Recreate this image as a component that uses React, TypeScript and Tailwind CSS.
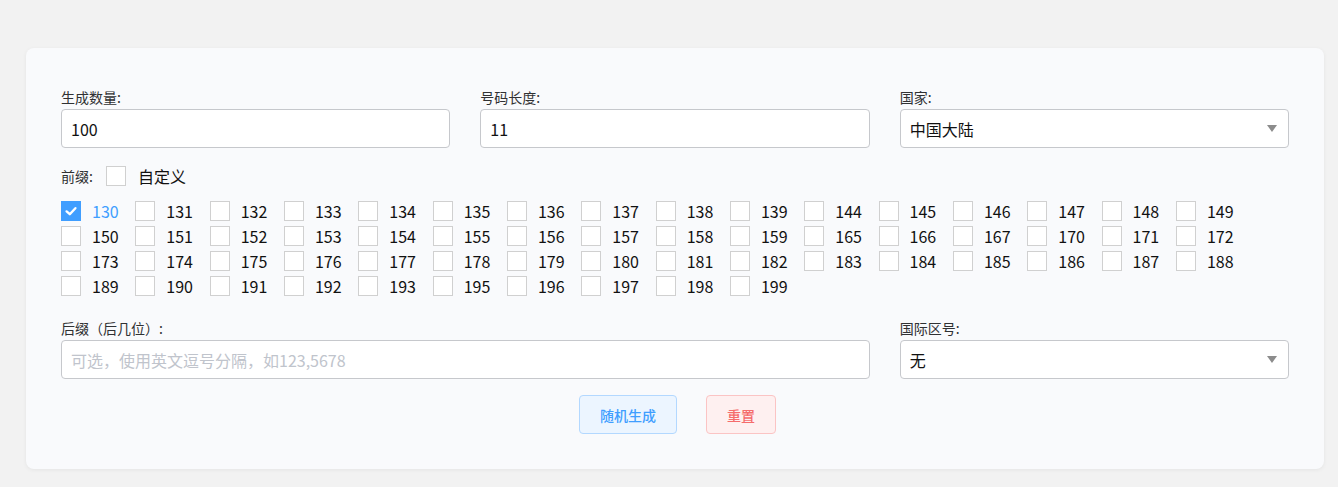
import { useState } from 'react'

const PREFIXES = [
    '130', '131', '132', '133', '134', '135', '136', '137', '138', '139', '144', '145', '146', '147', '148', '149',
    '150', '151', '152', '153', '154', '155', '156', '157', '158', '159', '165', '166', '167', '170', '171', '172',
    '173', '174', '175', '176', '177', '178', '179', '180', '181', '182', '183', '184', '185', '186', '187', '188',
    '189', '190', '191', '192', '193', '195', '196', '197', '198', '199',
]

function Box({ checked }: { checked: boolean }) {
    return (
        <span
            className={`w-5 h-5 shrink-0 flex items-center justify-center border ${checked
                ? 'bg-[#409eff] border-[#409eff]'
                : 'bg-white border-[#d0d0d0]'
                }`}
        >
            {checked && (
                <svg viewBox="0 0 20 20" className="w-4 h-4">
                    <polyline points="4.5,10.5 8.5,14 15.5,6.5" fill="none" stroke="#fff" strokeWidth="3" strokeLinecap="round" strokeLinejoin="round" />
                </svg>
            )}
        </span>
    )
}

function Field({ label, value, placeholder, select }: { label: string; value?: string; placeholder?: string; select?: boolean }) {
    return (
        <div>
            <div className="text-sm leading-5 text-[#303133] mb-[2px]">{label}</div>
            <div className="h-[39px] bg-white border border-[#c6c8cc] rounded-[4px] flex items-center pl-[9px] pr-[10px]">
                {value ? (
                    <span className="text-base text-[#111]">{value}</span>
                ) : (
                    <span className="text-base text-[#c0c4cc]">{placeholder}</span>
                )}
                {select && (
                    <svg viewBox="0 0 10 8" className="ml-auto w-[10px] h-[8px] mr-[1px]">
                        <polygon points="0,0 10,0 5,7" fill="#8c8c8c" />
                    </svg>
                )}
            </div>
        </div>
    )
}

export default function App() {
    const [selected, setSelected] = useState<string[]>(['130'])

    function toggle(p: string) {
        setSelected(s => (s.includes(p) ? s.filter(x => x !== p) : [...s, p]))
    }

    return (
        <div
            className="min-h-[487px] bg-[#f2f2f2] pt-[48px] px-[26px] pb-[17px]"
            style={{ fontFamily: '"Noto Sans CJK SC", "Noto Sans", sans-serif' }}
        >
            <div className="w-[1298px] bg-[#f9fafc] rounded-[8px] shadow-[0_1px_4px_rgba(0,0,0,0.06)] pt-[39px] pb-[35px] px-[35px]">
                {/* 第一行 */}
                <div className="grid grid-cols-3 gap-x-[30px]">
                    <Field label="生成数量:" value="100" />
                    <Field label="号码长度:" value="11" />
                    <Field label="国家:" value="中国大陆" select />
                </div>

                {/* 前缀 */}
                <div className="mt-[18px] flex items-center h-5">
                    <span className="text-sm text-[#303133] w-[45px]">前缀:</span>
                    <Box checked={false} />
                    <span className="ml-3 text-base text-[#111]">自定义</span>
                </div>

                <div className="mt-[15px] flex flex-wrap gap-y-[5px] w-[1200px]">
                    {PREFIXES.map(p => {
                        const on = selected.includes(p)
                        return (
                            <label key={p} onClick={() => toggle(p)} className="w-[74.33px] h-5 flex items-center cursor-pointer">
                                <Box checked={on} />
                                <span className={`ml-[11px] text-base leading-5 ${on ? 'text-[#409eff]' : 'text-[#111]'}`}>{p}</span>
                            </label>
                        )
                    })}
                </div>

                {/* 后缀 / 国际区号 */}
                <div className="mt-[22px] grid grid-cols-3 gap-x-[30px]">
                    <div className="col-span-2">
                        <Field label="后缀（后几位）:" placeholder="可选，使用英文逗号分隔，如123,5678" />
                    </div>
                    <Field label="国际区号:" value="无" select />
                </div>

                <div className="mt-[16px] flex justify-center gap-[29px] pl-[5px]">
                    <button className="w-[98px] h-[39px] rounded-[4px] border border-[#b3d8ff] bg-[#ecf5ff] text-[#409eff] text-sm font-medium">
                        随机生成
                    </button>
                    <button className="w-[70px] h-[39px] rounded-[4px] border border-[#fbc4c4] bg-[#fef0f0] text-[#f56c6c] text-sm font-medium">
                        重置
                    </button>
                </div>
            </div>
        </div>
    )
}
